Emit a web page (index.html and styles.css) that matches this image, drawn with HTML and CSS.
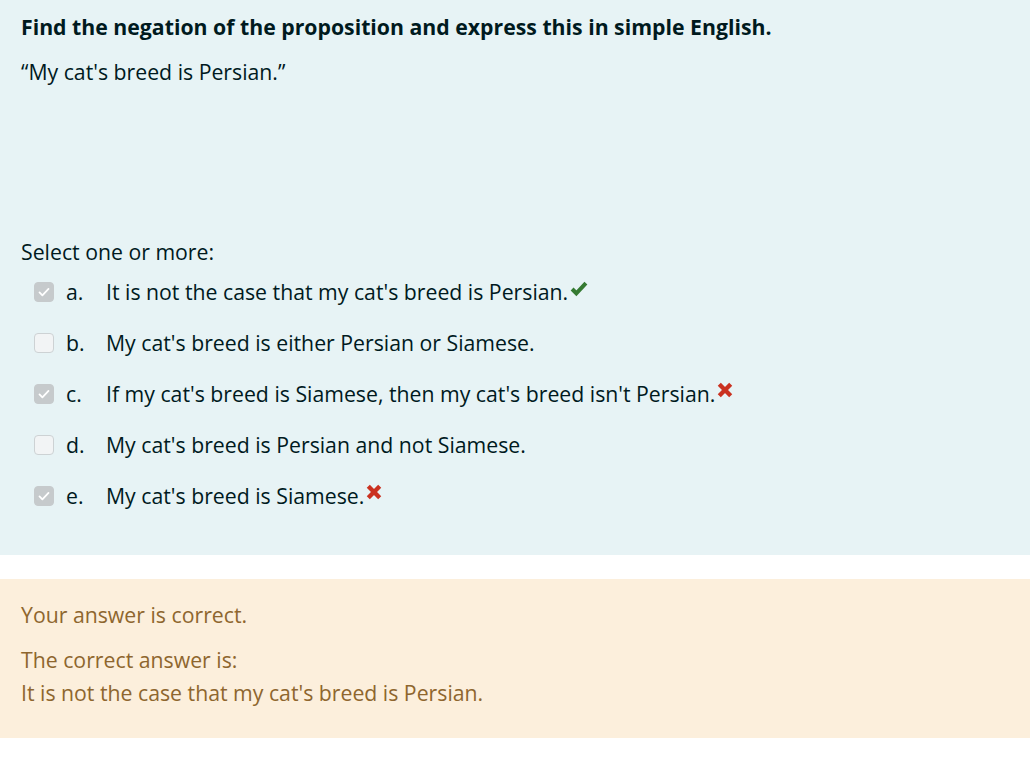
FILE: index.html
```html
<!DOCTYPE html>
<html lang="en">
<head>
<meta charset="utf-8">
<title>Question</title>
<link rel="stylesheet" href="styles.css">
</head>
<body>
<div class="que">
  <div class="formulation">
    <div class="qtext">
      <p class="q-title">Find the negation of the proposition and express this in simple English.</p>
      <p class="q-prop">“My cat's breed is Persian.”</p>
    </div>
    <div class="prompt">Select one or more:</div>
    <div class="answer">
      <div class="opt">
        <span class="cb checked"><svg viewBox="0 0 20 20" width="20" height="20"><path d="M5 10.5l3.2 3.2L15 6.5" fill="none" stroke="#fff" stroke-width="2" stroke-linecap="round" stroke-linejoin="round"/></svg></span>
        <span class="num">a.</span>
        <span class="label">It is not the case that my cat's breed is Persian.</span>
        <svg class="ico ok" viewBox="0 0 16 16" width="18" height="17"><path d="M1.5 8.5l4 4L14.5 3" fill="none" stroke="#357a32" stroke-width="3.8" stroke-linejoin="miter"/></svg>
      </div>
      <div class="opt">
        <span class="cb"></span>
        <span class="num">b.</span>
        <span class="label">My cat's breed is either Persian or Siamese.</span>
      </div>
      <div class="opt">
        <span class="cb checked"><svg viewBox="0 0 20 20" width="20" height="20"><path d="M5 10.5l3.2 3.2L15 6.5" fill="none" stroke="#fff" stroke-width="2" stroke-linecap="round" stroke-linejoin="round"/></svg></span>
        <span class="num">c.</span>
        <span class="label">If my cat's breed is Siamese, then my cat's breed isn't Persian.</span>
        <svg class="ico bad" viewBox="0 0 14 14" width="16" height="16"><path d="M2 2L12 12M12 2L2 12" fill="none" stroke="#ca3120" stroke-width="3.8"/></svg>
      </div>
      <div class="opt">
        <span class="cb"></span>
        <span class="num">d.</span>
        <span class="label">My cat's breed is Persian and not Siamese.</span>
      </div>
      <div class="opt">
        <span class="cb checked"><svg viewBox="0 0 20 20" width="20" height="20"><path d="M5 10.5l3.2 3.2L15 6.5" fill="none" stroke="#fff" stroke-width="2" stroke-linecap="round" stroke-linejoin="round"/></svg></span>
        <span class="num">e.</span>
        <span class="label">My cat's breed is Siamese.</span>
        <svg class="ico bad" viewBox="0 0 14 14" width="16" height="16"><path d="M2 2L12 12M12 2L2 12" fill="none" stroke="#ca3120" stroke-width="3.8"/></svg>
      </div>
    </div>
  </div>
  <div class="outcome">
    <p class="feedback">Your answer is correct.</p>
    <p class="right">The correct answer is:<br>It is not the case that my cat's breed is Persian.</p>
  </div>
</div>
</body>
</html>
```

FILE: styles.css
```css
html, body {
  margin: 0;
  padding: 0;
  background: #fff;
}
body {
  font-family: "Open Sans", "Noto Sans", "Liberation Sans", sans-serif;
  font-size: 21.25px;
  line-height: 33px;
  color: #001a1e;
}
p { margin: 0; }
.formulation {
  background: #e7f3f5;
  padding: 10px 21px 0;
  height: 545px;
}
.q-title {
  font-weight: 700;
}
.q-prop {
  margin-top: 12px;
}
.prompt {
  margin-top: 147px;
}
.answer {
  margin-top: -2px;
  padding-left: 13px;
}
.opt {
  display: flex;
  align-items: center;
  height: 51px;
}
.cb {
  width: 18px;
  height: 18px;
  border: 1px solid #cdd2d4;
  border-radius: 4px;
  background: #f2f4f5;
  display: inline-flex;
  align-items: center;
  justify-content: center;
  flex: none;
}
.cb.checked {
  background: #c6cacc;
  border-color: #c6cacc;
}
.cb svg { width: 18px; height: 18px; }
.num {
  width: 40px;
  padding-left: 12px;
  flex: none;
}
.ico {
  margin-left: 2px;
  margin-top: -7px;
  flex: none;
}
.outcome {
  margin-top: 24px;
  background: #fcefdc;
  color: #8e662e;
  padding: 19px 21px 29px;
}
.feedback {
  margin-bottom: 12px;
}
```
